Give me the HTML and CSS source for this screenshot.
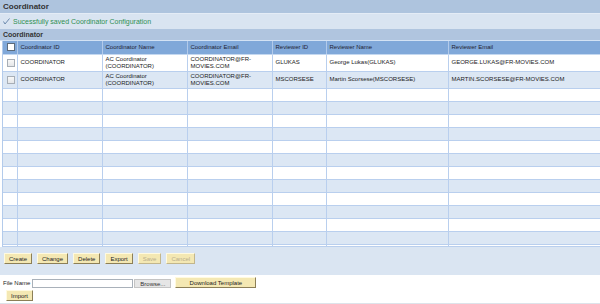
FILE: index.html
```html
<!DOCTYPE html>
<html lang="en">
<head>
    <meta charset="UTF-8">
    <title>Coordinator</title>
    <link rel="stylesheet" href="styles.css">
</head>
<body>
    <div class="page-title">Coordinator</div>
    <div class="message">
        <svg class="check" width="7" height="7" viewBox="0 0 7 7"><polyline points="0.5,3.5 2,6 6.5,0.5" fill="none" stroke="#5f7fa6" stroke-width="0.9"/></svg>
        <span>Sucessfully saved Coordinator Configuration</span>
    </div>
    <div class="section-title">Coordinator</div>
    <div class="grid-wrap">
        <table class="grid">
            <colgroup>
                <col class="c-check">
                <col class="c-id">
                <col class="c-name">
                <col class="c-email">
                <col class="c-rid">
                <col class="c-rname">
                <col class="c-remail">
            </colgroup>
            <thead>
                <tr>
                    <th><span class="box head-box"></span></th>
                    <th>Coordinator ID</th>
                    <th>Coordinator Name</th>
                    <th>Coordinator Email</th>
                    <th>Reviewer ID</th>
                    <th>Reviewer Name</th>
                    <th>Reviewer Email</th>
                </tr>
            </thead>
            <tbody id="grid-body">
                <tr class="data">
                    <td><span class="box"></span></td>
                    <td>COORDINATOR</td>
                    <td>AC Coordinator (COORDINATOR)</td>
                    <td>COORDINATOR@FR-MOVIES.COM</td>
                    <td>GLUKAS</td>
                    <td>George Lukas(GLUKAS)</td>
                    <td>GEORGE.LUKAS@FR-MOVIES.COM</td>
                </tr>
                <tr class="data alt">
                    <td><span class="box"></span></td>
                    <td>COORDINATOR</td>
                    <td>AC Coordinator (COORDINATOR)</td>
                    <td>COORDINATOR@FR-MOVIES.COM</td>
                    <td>MSCORSESE</td>
                    <td>Martin Scorsese(MSCORSESE)</td>
                    <td>MARTIN.SCORSESE@FR-MOVIES.COM</td>
                </tr>
            </tbody>
        </table>
    </div>
    <div class="toolbar">
        <button class="btn">Create</button>
        <button class="btn">Change</button>
        <button class="btn">Delete</button>
        <button class="btn">Export</button>
        <button class="btn" disabled>Save</button>
        <button class="btn" disabled>Cancel</button>
    </div>
    <div class="upload">
        <div class="upload-row">
            <label for="file-name">File Name</label>
            <input type="text" id="file-name">
            <button class="browse">Browse...</button>
            <button class="btn download">Download Template</button>
        </div>
        <button class="btn import">Import</button>
    </div>
    <script>
        // Fill the rest of the grid with empty, striped rows
        const body = document.getElementById('grid-body');
        for (let i = 0; i < 13; i++) {
            const row = document.createElement('tr');
            row.className = i % 2 ? 'empty alt' : 'empty';
            for (let c = 0; c < 7; c++) {
                row.appendChild(document.createElement('td'));
            }
            body.appendChild(row);
        }
    </script>
</body>
</html>
```

FILE: styles.css
```css
* {
    box-sizing: border-box;
}

body {
    margin: 0;
    font-family: "Liberation Sans", Arial, sans-serif;
    font-size: 6px;
    color: #222;
    background-color: white;
}

.page-title {
    height: 13px;
    line-height: 13px;
    padding-left: 3px;
    font-size: 8px;
    font-weight: bold;
    color: #333;
    background-color: #aec4de;
}

.message {
    height: 16px;
    display: flex;
    align-items: center;
    gap: 3px;
    padding-left: 3px;
    border-top: 1px solid #e4ecf6;
    background-color: #d9e4f1;
    font-size: 7px;
    color: #2f8f52;
}

.section-title {
    height: 12px;
    line-height: 11px;
    padding-left: 3px;
    font-size: 7px;
    font-weight: bold;
    color: #333;
    background-color: #b0c5df;
    border-bottom: 1px solid #d3e2f4;
}

.grid-wrap {
    height: 206px;
    overflow: hidden;
    margin-left: 2px;
    border-left: 1px solid #b3cbeb;
    border-bottom: 1px solid #b9cfee;
}

.grid {
    width: 598px;
    table-layout: fixed;
    border-collapse: collapse;
}

.c-check { width: 14px; }
.c-id { width: 85px; }
.c-name { width: 85px; }
.c-email { width: 85px; }
.c-rid { width: 54px; }
.c-rname { width: 122px; }
.c-remail { width: 153px; }

.grid th {
    height: 13px;
    padding: 0 3px;
    font-weight: normal;
    text-align: left;
    color: #223;
    background-color: #80a8d9;
    border-left: 1px solid #b2caea;
    border-bottom: 1px solid #c4d8f0;
}

.grid th:first-child {
    border-left: none;
}

.grid td {
    padding: 1px 3px;
    line-height: 7px;
    vertical-align: middle;
    border-left: 1px solid #b9cfee;
    border-bottom: 1px solid #b9cfee;
}

.grid td:first-child {
    border-left: none;
    padding: 0 0 0 4px;
}

.grid tr.alt td {
    background-color: #dce7f4;
}

.grid tr.data td {
    height: 17px;
}

.grid tr.empty td {
    height: 13px;
}

.box {
    display: block;
    width: 8px;
    height: 8px;
    border: 1px solid #a7aeb6;
    background: linear-gradient(#f8f8f8, #e4e6e9);
}

.head-box {
    margin-left: 1px;
    border-color: #5d6b7a;
    background: white;
}

.toolbar {
    height: 28px;
    display: flex;
    align-items: flex-start;
    gap: 5px;
    padding: 6px 4px 0;
    background-color: #dae5f2;
}

.btn {
    height: 11px;
    padding: 0 4px;
    font-family: inherit;
    font-size: 6px;
    color: #222;
    background-color: #f4e8b3;
    border: 1px solid;
    border-color: #fffae0 #8c7f57 #8c7f57 #fffae0;
}

.btn:disabled {
    color: #b9ae8c;
    border-color: #fffae0 #c2b68c #c2b68c #fffae0;
}

.upload {
    height: 29px;
    padding: 2px 0 0 3px;
    border-bottom: 1px solid #dde3ea;
}

.upload-row {
    display: flex;
    align-items: flex-end;
}

.upload-row label {
    margin-right: 2px;
    line-height: 9px;
}

.upload-row input {
    width: 101px;
    height: 9px;
    margin: 0;
    padding: 0;
    border: 1px solid #a9b1ba;
}

.browse {
    height: 9px;
    margin-left: 1px;
    padding: 0 5px;
    font-family: inherit;
    font-size: 6px;
    color: #333;
    background-color: #e6e6e6;
    border: 1px solid #c4c4c4;
}

.download {
    width: 81px;
    margin-left: 4px;
    align-self: flex-start;
}

.import {
    margin: 2px 0 0 3px;
}
```
